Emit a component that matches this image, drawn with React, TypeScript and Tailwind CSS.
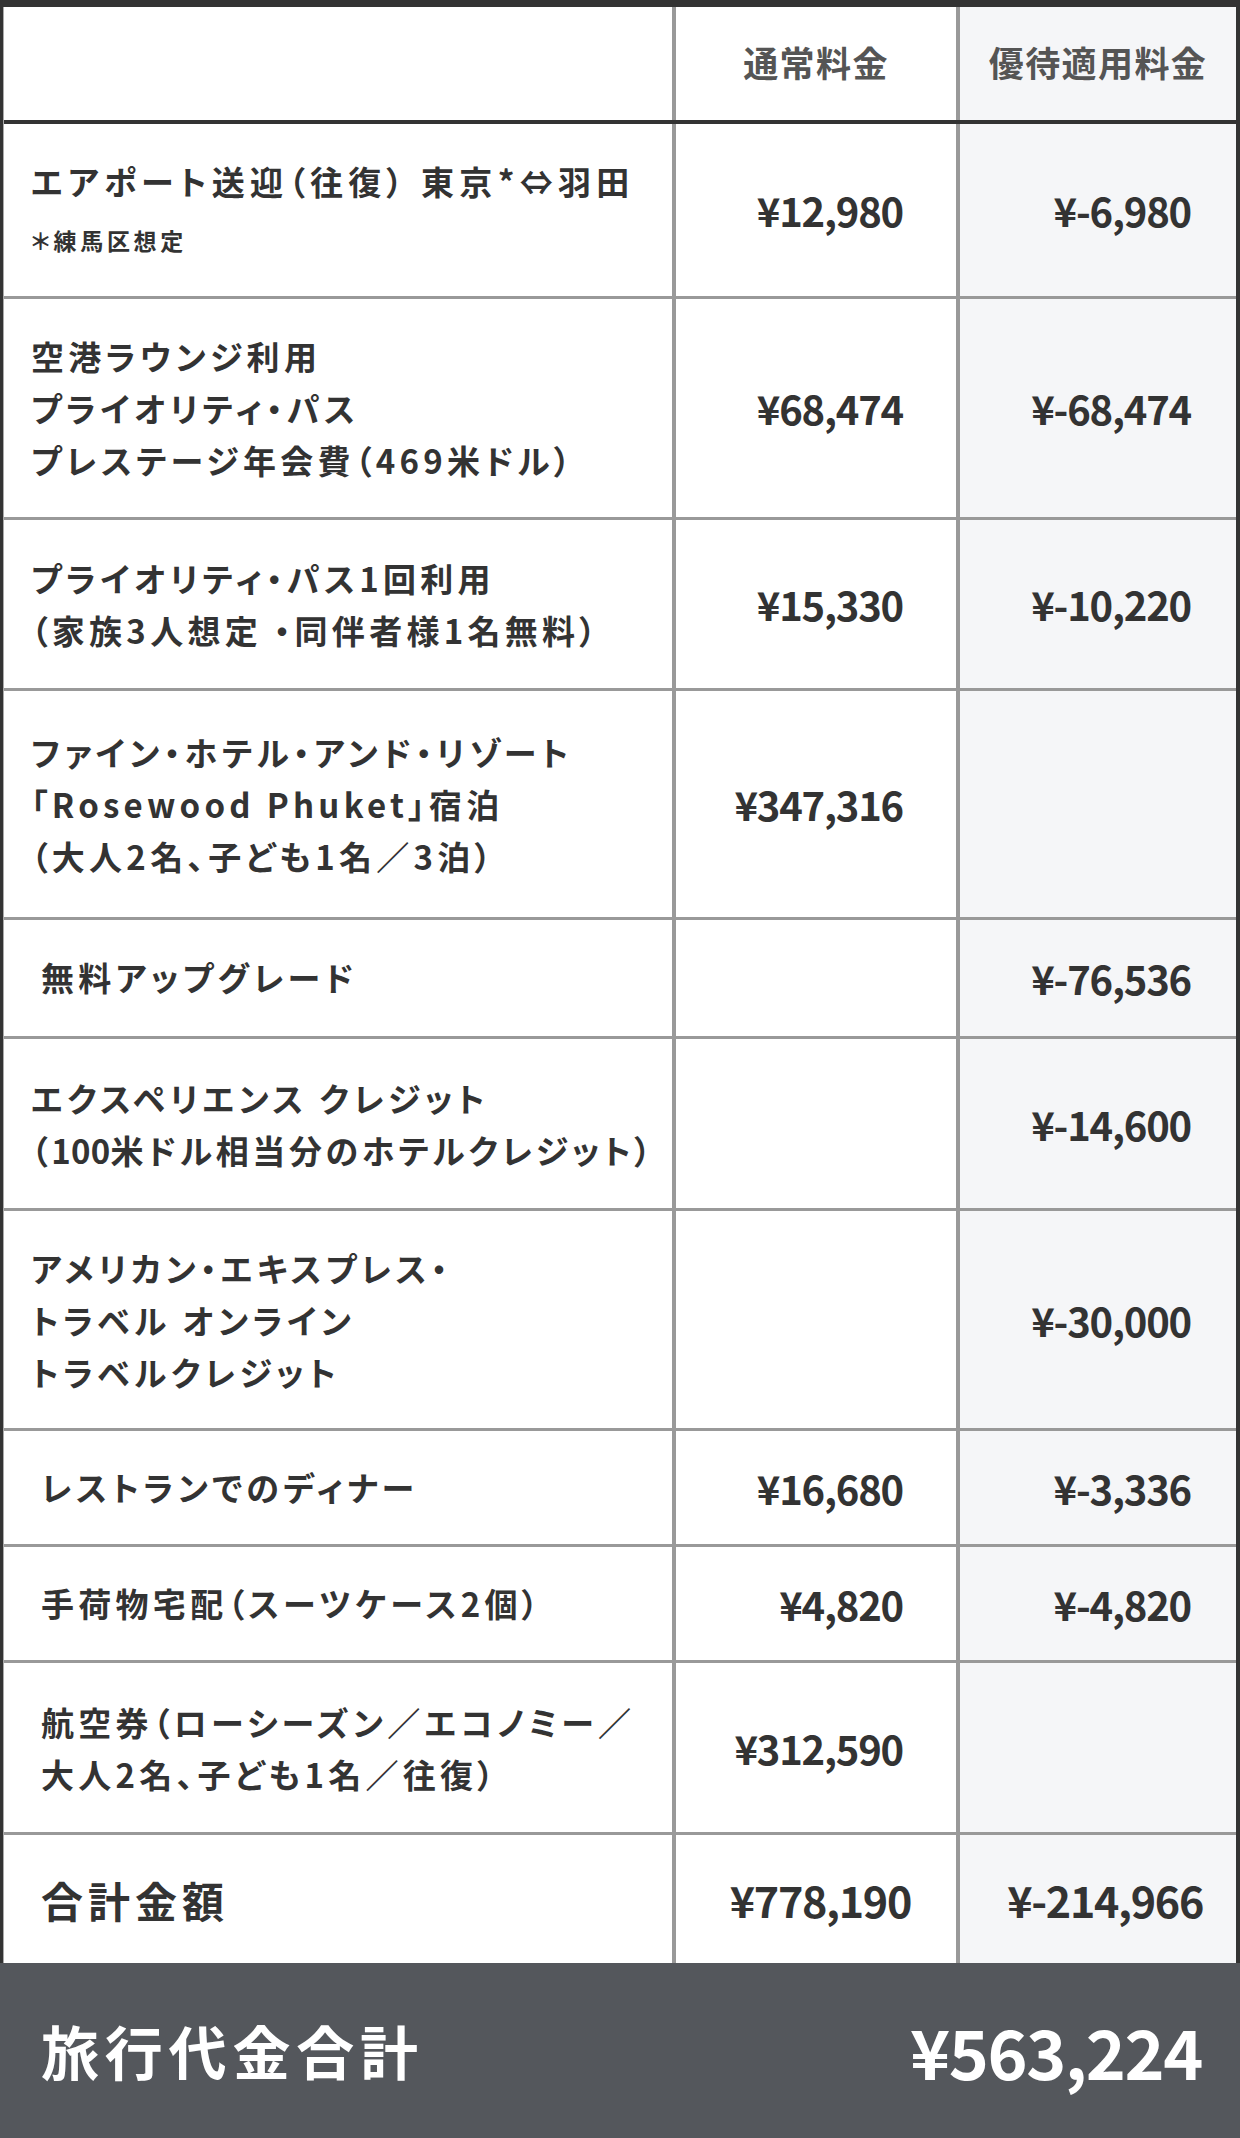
import React from "react";

type Row = {
  label: React.ReactNode;
  normal?: string;
  discount?: string;
  h: string;
  indent?: boolean;
};

const rows: Row[] = [
  {
    label: (
      <div className="flex flex-col pt-[7px]">
        <span className="leading-[52px] tracking-[0.16em]">エアポート送迎（往復） 東京*⇔羽田</span>
        <span className="text-[23px] leading-[66px] tracking-[0.16em]">＊練馬区想定</span>
      </div>
    ),
    normal: "¥12,980",
    discount: "¥-6,980",
    h: "h-[175px]",
  },
  {
    label: (
      <div className="flex flex-col leading-[52px]">
        <span>空港ラウンジ利用</span>
        <span>プライオリティ・パス</span>
        <span>プレステージ年会費（469米ドル）</span>
      </div>
    ),
    normal: "¥68,474",
    discount: "¥-68,474",
    h: "h-[221px]",
  },
  {
    label: (
      <div className="flex flex-col leading-[52px]">
        <span>プライオリティ・パス1回利用</span>
        <span>（家族3人想定 ・同伴者様1名無料）</span>
      </div>
    ),
    normal: "¥15,330",
    discount: "¥-10,220",
    h: "h-[171px]",
  },
  {
    label: (
      <div className="flex flex-col leading-[52px]">
        <span>ファイン・ホテル・アンド・リゾート</span>
        <span>「Rosewood Phuket」宿泊</span>
        <span>（大人2名、子ども1名／3泊）</span>
      </div>
    ),
    normal: "¥347,316",
    h: "h-[229px]",
  },
  {
    label: <span>無料アップグレード</span>,
    discount: "¥-76,536",
    h: "h-[119px]",
    indent: true,
  },
  {
    label: (
      <div className="flex flex-col leading-[52px]">
        <span>エクスペリエンス クレジット</span>
        <span className="tracking-[0.11em]">
          （<span className="tracking-[0.01em]">100</span>米ドル相当分のホテルクレジット）
        </span>
      </div>
    ),
    discount: "¥-14,600",
    h: "h-[172px]",
  },
  {
    label: (
      <div className="flex flex-col leading-[52px]">
        <span>アメリカン・エキスプレス・</span>
        <span>トラベル オンライン</span>
        <span>トラベルクレジット</span>
      </div>
    ),
    discount: "¥-30,000",
    h: "h-[220px]",
  },
  {
    label: <span>レストランでのディナー</span>,
    normal: "¥16,680",
    discount: "¥-3,336",
    h: "h-[116px]",
    indent: true,
  },
  {
    label: <span>手荷物宅配（スーツケース2個）</span>,
    normal: "¥4,820",
    discount: "¥-4,820",
    h: "h-[116px]",
    indent: true,
  },
  {
    label: (
      <div className="flex flex-col leading-[52px]">
        <span>航空券（ローシーズン／エコノミー／</span>
        <span>大人2名、子ども1名／往復）</span>
      </div>
    ),
    normal: "¥312,590",
    h: "h-[172px]",
    indent: true,
  },
];

export default function App() {
  return (
    <div
      className="w-[1240px] h-[2138px] bg-white text-[#333] font-bold"
      style={{ fontFamily: '"Noto Sans CJK JP", "Noto Sans", sans-serif' }}
    >
      <div className="h-[7px] bg-[#333]" />
      <div className="border-l-[3px] border-r-4 border-[#333]">
        <div className="border-l border-[#aaa]">
          {/* header */}
          <div className="flex h-[117px] border-b-4 border-[#333]">
            <div className="w-[668px]" />
            <div className="w-[284px] border-l-4 border-[#999] flex items-center justify-center pb-[3px] text-[35px] text-[#555] tracking-[0.04em]">
              通常料金
            </div>
            <div className="flex-1 border-l-4 border-[#999] bg-[#f5f6f8] flex items-center justify-center pb-[3px] text-[35px] text-[#555] tracking-[0.04em]">
              優待適用料金
            </div>
          </div>
          {rows.map((r, i) => (
            <div key={i} className={`flex ${r.h} border-b-[3px] border-[#999]`}>
              <div
                className={`w-[668px] flex items-center whitespace-nowrap text-[33px] tracking-[0.13em] [font-feature-settings:'palt'] ${
                  r.indent ? "pl-[37px]" : "pl-[27px]"
                }`}
              >
                {r.label}
              </div>
              <div className="w-[284px] border-l-4 border-[#999] flex items-center justify-end pr-[53px] text-[40px] tracking-[-0.03em]">
                {r.normal}
              </div>
              <div className="flex-1 border-l-4 border-[#999] bg-[#f5f6f8] flex items-center justify-end pr-[45px] text-[40px] tracking-[-0.03em]">
                {r.discount}
              </div>
            </div>
          ))}
          {/* total */}
          <div className="flex h-[128px]">
            <div className="w-[668px] flex items-center pl-[37px] text-[42px] tracking-[0.12em]">合計金額</div>
            <div className="w-[284px] border-l-4 border-[#999] flex items-center justify-end pr-[45px] text-[43px] tracking-[-0.03em]">
              ¥778,190
            </div>
            <div className="flex-1 border-l-4 border-[#999] bg-[#f5f6f8] flex items-center justify-end pr-[33px] text-[43px] tracking-[-0.03em]">
              ¥-214,966
            </div>
          </div>
        </div>
      </div>
      <div className="h-[175px] bg-[#54575c] flex items-center justify-between pl-[41px] pr-[38px] text-white">
        <span className="text-[58px] tracking-[0.1em]">旅行代金合計</span>
        <span className="text-[68px] tracking-[-0.02em]">¥563,224</span>
      </div>
    </div>
  );
}
